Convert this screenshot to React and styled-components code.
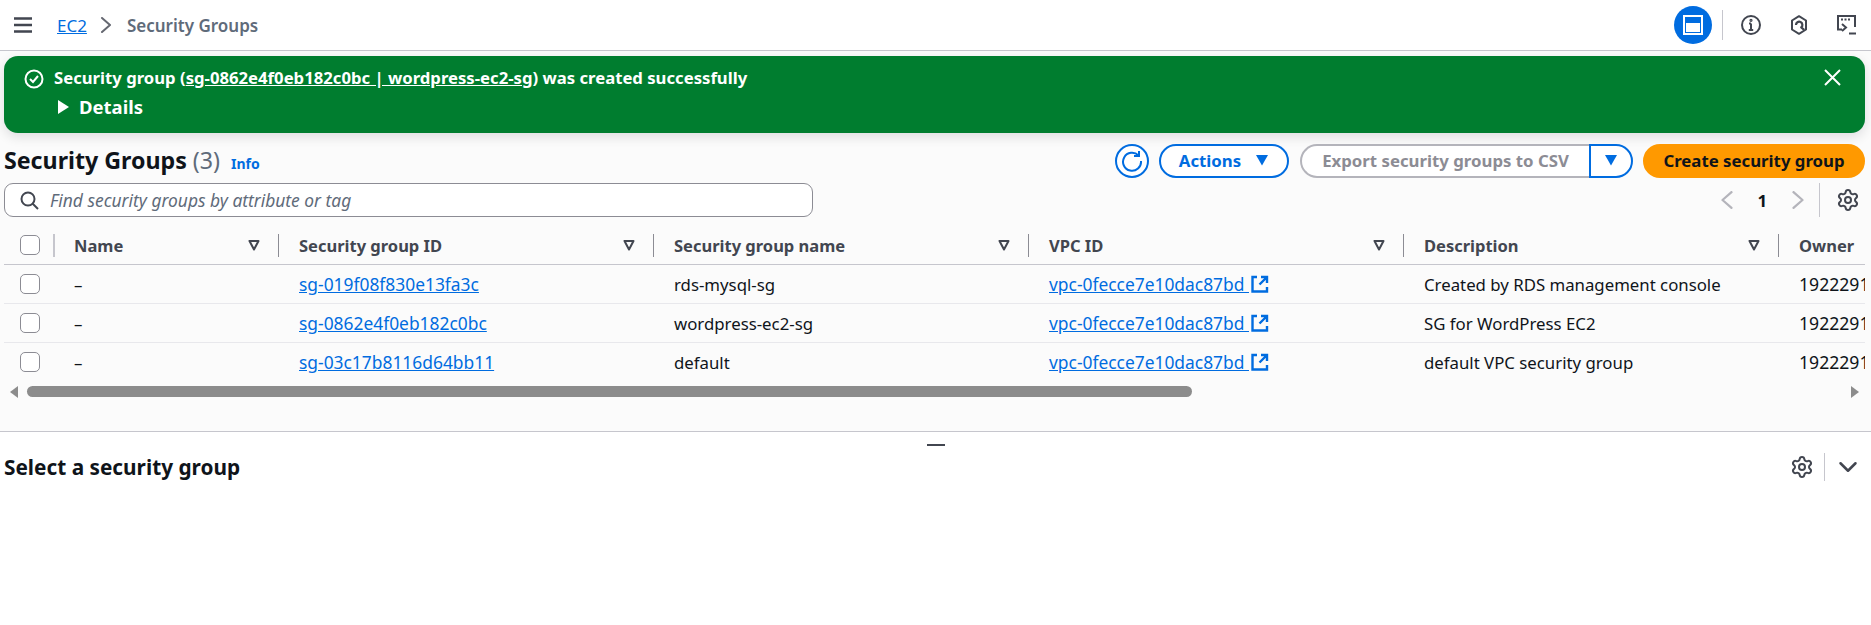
import React from 'react';
import styled, { createGlobalStyle } from 'styled-components';
import { Settings } from 'lucide-react';

const GlobalStyle = createGlobalStyle`
  html, body { margin: 0; padding: 0; background: #fff; }
  body { font-family: 'Noto Sans', sans-serif; color: #0f141a; font-size: 16.8px; overflow: hidden; }
`;

const rows = [
  { id: 'sg-019f08f830e13fa3c', name: 'rds-mysql-sg', desc: 'Created by RDS management console' },
  { id: 'sg-0862e4f0eb182c0bc', name: 'wordpress-ec2-sg', desc: 'SG for WordPress EC2' },
  { id: 'sg-03c17b8116d64bb11', name: 'default', desc: 'default VPC security group' },
];

const Page = styled.div`
  width: 1871px;
  height: 625px;
  background: #fff;
  overflow: hidden;
`;

const TopBar = styled.header`
  height: 50px;
  border-bottom: 1px solid #c6c6cd;
  display: flex;
  align-items: center;
  padding: 0 15px 0 14px;
`;

const Crumbs = styled.nav`
  display: flex;
  align-items: center;
  margin-left: 25px;
  font-size: 17px;
  flex: 1;
`;

const CrumbLink = styled.a`
  color: #006ce0;
  text-decoration: underline;
`;

const CrumbSep = styled.span`
  display: flex;
  margin-left: 11px;
`;

const CrumbCurrent = styled.span`
  color: #5f6b7a;
  font-weight: 600;
  margin-left: 13px;
`;

const IconRow = styled.div`
  display: flex;
  align-items: center;
`;

const RoundBlue = styled.div`
  width: 38px;
  height: 38px;
  border-radius: 50%;
  background: #006ce0;
  display: flex;
  align-items: center;
  justify-content: center;
`;

const VLine = styled.span`
  width: 1px;
  height: ${p => p.$h || 30}px;
  background: ${p => p.$c || '#c6c6cd'};
  margin: ${p => p.$m || '0'};
  flex: none;
`;

const TopIcon = styled.span`
  display: flex;
  margin-left: ${p => p.$ml}px;
`;

const Content = styled.main`
  box-sizing: border-box;
  background: #fbfbfb;
  height: 381px;
  padding: 5px 6px 0 4px;
  border-bottom: 1px solid #c6c6cd;
`;

const Banner = styled.div`
  box-sizing: border-box;
  height: 77px;
  background: #007d2f;
  border-radius: 14px;
  color: #fff;
  box-shadow: 0 4px 12px rgba(0, 7, 22, 0.12);
  display: flex;
  align-items: flex-start;
  padding: 11px 24px 0 20px;
  font-size: 16.7px;
  font-weight: 700;
`;

const BannerIcon = styled.svg`
  margin-top: 2px;
  flex: none;
`;

const BannerBody = styled.div`
  flex: 1;
  margin-left: 10px;
  line-height: 22px;
`;

const BannerLink = styled.a`
  color: #fff;
  text-decoration: underline;
`;

const Details = styled.div`
  display: flex;
  align-items: center;
  gap: 10px;
  margin-top: 6px;
  padding-left: 4px;
  font-size: 18.5px;
  line-height: 24px;
  font-weight: 700;
`;

const HeaderRow = styled.div`
  display: flex;
  align-items: center;
  height: 34px;
  margin-top: 11px;
`;

const Title = styled.h1`
  margin: 0;
  padding-bottom: 2px;
  font-size: 23.2px;
  font-weight: 700;
  color: #0f141a;
`;

const Count = styled.span`
  font-weight: 400;
  color: #5f6b7a;
  margin-left: 6px;
`;

const InfoLink = styled.a`
  color: #006ce0;
  font-size: 14px;
  font-weight: 700;
  margin-left: 11px;
  margin-top: 4px;
`;

const Spacer = styled.div`
  flex: 1;
`;

const RefreshBtn = styled.button`
  width: 34px;
  height: 34px;
  padding: 0;
  border: 2px solid #006ce0;
  border-radius: 50%;
  background: #fff;
  display: flex;
  align-items: center;
  justify-content: center;
`;

const Pill = styled.button`
  height: 34px;
  box-sizing: border-box;
  background: ${p => p.$bg || '#fff'};
  border: 2px solid ${p => p.$bd || '#006ce0'};
  border-radius: 17px;
  color: ${p => p.$fg || '#006ce0'};
  font: 700 16.8px 'Noto Sans', sans-serif;
  display: flex;
  align-items: center;
  justify-content: center;
  gap: 14px;
  padding: 0 0 2px;
  width: ${p => p.$w}px;
  margin-left: ${p => p.$ml}px;
`;

const SplitLeft = styled(Pill)`
  border-right: none;
  border-radius: 17px 0 0 17px;
`;

const SplitRight = styled(Pill)`
  border-radius: 0 17px 17px 0;
`;

const SearchRow = styled.div`
  display: flex;
  align-items: center;
  height: 34px;
  margin-top: 5px;
  padding-right: 5px;
`;

const SearchBox = styled.div`
  width: 809px;
  height: 34px;
  box-sizing: border-box;
  background: #fff;
  border: 1px solid #8c8c94;
  border-radius: 9px;
  display: flex;
  align-items: center;
  gap: 11px;
  padding: 0 15px;
  color: #5f6b7a;
  font-size: 17.4px;
  font-style: italic;
`;

const Pager = styled.div`
  display: flex;
  align-items: center;
  color: #0f141a;
  font-weight: 700;
`;

const PageNum = styled.span`
  margin: 0 22px 0 21px;
`;

const Table = styled.div`
  overflow: hidden;
  margin-top: 9px;
`;

const Grid = styled.div`
  width: 2100px;
`;

const Row = styled.div`
  box-sizing: border-box;
  display: grid;
  grid-template-columns: 49px 225px 375px 375px 375px 375px 326px;
  height: 39px;
  align-items: center;
  border-bottom: 1px solid ${p => p.$line};
`;

const CheckCell = styled.div`
  padding-left: 16px;
  display: flex;
  align-items: center;
`;

const Check = styled.span`
  width: 20px;
  height: 20px;
  box-sizing: border-box;
  border: 1px solid #8c8c94;
  border-radius: 5px;
  background: #fff;
`;

const HeadCell = styled.div`
  display: flex;
  align-items: center;
  height: 23px;
  padding-left: ${p => p.$first ? 19 : 20}px;
  padding-right: 18px;
  border-left: ${p => p.$first ? '2px solid #c6c6cd' : '1px solid #8c8c94'};
  color: #424650;
  font-size: 16.5px;
  font-weight: 700;
  justify-content: space-between;
`;

const Cell = styled.div`
  padding-left: 21px;
  color: #0f141a;
  white-space: pre;
  display: flex;
  align-items: center;
  gap: 2px;
`;

const OwnerCell = styled(Cell)`
  font-size: 17.6px;
`;

const RowLink = styled.a`
  color: #006ce0;
  text-decoration: underline;
  font-size: 17.4px;
`;

const ScrollRow = styled.div`
  display: flex;
  align-items: center;
  height: 11px;
  margin-top: 4px;
  padding: 0 6px;
`;

const Thumb = styled.div`
  width: 1165px;
  height: 11px;
  border-radius: 6px;
  background: #8c8c8c;
  margin-left: 9px;
`;

const Handle = styled.div`
  display: flex;
  justify-content: center;
  height: 14px;
  align-items: flex-end;
`;

const HandleBar = styled.span`
  width: 18px;
  height: 2px;
  background: #424650;
`;

const SplitPanel = styled.section`
  display: flex;
  align-items: center;
  padding: 0 13px 0 4px;
  height: 34px;
  margin-top: 4px;
`;

const PanelTitle = styled.h2`
  margin: 0;
  font-size: 20.8px;
  font-weight: 700;
  flex: 1;
`;

const Hamburger = () => (
  <svg width="18" height="16" viewBox="0 0 18 16" fill="none" stroke="#424650" strokeWidth="2.4">
    <path d="M0 1.5h18M0 8h18M0 14.5h18" />
  </svg>
);

const Chevron = ({ dir = 'right', color = '#656871', size = 16 }) => (
  <svg width={size} height={size} viewBox="0 0 16 16" fill="none" stroke={color} strokeWidth="2" strokeLinejoin="round" strokeLinecap="round">
    {dir === 'right' && <path d="M4 1l8 7-8 7" />}
    {dir === 'left' && <path d="M12 1L4 8l8 7" />}
    {dir === 'down' && <path d="M2 5l6 6 6-6" />}
  </svg>
);

const Gear = () => <Settings size={24} color="#424650" strokeWidth={2} />;

const SortIcon = () => (
  <svg width="12" height="12" viewBox="0 0 12 12" fill="none" stroke="#424650" strokeWidth="2" strokeLinejoin="round">
    <path d="M1.5 2h9L6 10.5z" />
  </svg>
);

const Caret = ({ color = '#006ce0' }) => (
  <svg width="14" height="12" viewBox="0 0 14 12" fill={color}>
    <path d="M1 1h12L7 11.5z" />
  </svg>
);

const External = () => (
  <svg width="18" height="18" viewBox="0 0 18 18" fill="none" stroke="#006ce0" strokeWidth="2.4">
    <path d="M6 2H1.5v14.5H16V12" />
    <path d="M10 2h6v6M16 2L8.5 9.5" />
  </svg>
);

const Refresh = () => (
  <svg width="22" height="22" viewBox="0 0 22 22" fill="none" stroke="#006ce0" strokeWidth="2">
    <path d="M17.5 5.5A9 9 0 1 0 20 11" />
    <path d="M18 1v5h-5" />
  </svg>
);

const App = () => (
  <Page>
    <GlobalStyle />
    <TopBar>
      <Hamburger />
      <Crumbs>
        <CrumbLink>EC2</CrumbLink>
        <CrumbSep><Chevron size={16} /></CrumbSep>
        <CrumbCurrent>Security Groups</CrumbCurrent>
      </Crumbs>
      <IconRow>
        <RoundBlue>
          <svg width="22" height="22" viewBox="0 0 22 22" fill="none">
            <rect x="2" y="2" width="18" height="18" stroke="#fff" strokeWidth="2" />
            <rect x="4" y="9" width="14" height="9" fill="#fff" />
          </svg>
        </RoundBlue>
        <VLine $m="0 0 0 10px" />
        <TopIcon $ml={18}>
          <svg width="20" height="20" viewBox="0 0 20 20" fill="none" stroke="#424650" strokeWidth="2">
            <circle cx="10" cy="10" r="9" />
            <path d="M10 8.5V15M7.8 15h4.4M8 8.5h2" />
            <circle cx="10" cy="5.3" r="0.6" />
          </svg>
        </TopIcon>
        <TopIcon $ml={29}>
          <svg width="18" height="20" viewBox="0 0 18 20" fill="none" stroke="#424650" strokeWidth="2" strokeLinejoin="round">
            <path d="M9 1.2l7 4.3v9L9 18.8l-7-4.3v-9z" />
            <path d="M6 10a3.2 3.2 0 1 1 5.2 2.4l3 2.4" strokeWidth="2.2" />
          </svg>
        </TopIcon>
        <TopIcon $ml={29}>
          <svg width="19" height="20" viewBox="0 0 19 20" fill="none" stroke="#424650" strokeWidth="2">
            <path d="M5 14.5H1V1h17v11" />
            <path d="M4 4.5h2M7.5 4.5h2M11 4.5h2" />
            <path d="M5 9l4 3.5L5 16M12 18.5h7" />
          </svg>
        </TopIcon>
      </IconRow>
    </TopBar>

    <Content>
      <Banner>
        <BannerIcon width="20" height="20" viewBox="0 0 20 20" fill="none" stroke="#fff" strokeWidth="2">
          <circle cx="10" cy="10" r="8.5" />
          <path d="M6 10l3 3 5-6" />
        </BannerIcon>
        <BannerBody>
          Security group (<BannerLink>sg-0862e4f0eb182c0bc | wordpress-ec2-sg</BannerLink>) was created successfully
          <Details>
            <svg width="11" height="14" viewBox="0 0 11 14" fill="#fff"><path d="M0 0l11 7-11 7z" /></svg>
            Details
          </Details>
        </BannerBody>
        <BannerIcon width="17" height="17" viewBox="0 0 17 17" fill="none" stroke="#fff" strokeWidth="2">
          <path d="M1 1l15 15M16 1L1 16" />
        </BannerIcon>
      </Banner>

      <HeaderRow>
        <Title>Security Groups<Count>(3)</Count></Title>
        <InfoLink>Info</InfoLink>
        <Spacer />
        <RefreshBtn><Refresh /></RefreshBtn>
        <Pill $w={130} $ml={10}>Actions <Caret /></Pill>
        <SplitLeft $w={289} $ml={11} $bd="#b4b4bb" $fg="#8c8c94">Export security groups to CSV</SplitLeft>
        <SplitRight $w={44} $ml={0}><Caret /></SplitRight>
        <Pill $w={222} $ml={10} $bg="#ff9900" $bd="#ff9900" $fg="#0f141a">Create security group</Pill>
      </HeaderRow>

      <SearchRow>
        <SearchBox>
          <svg width="19" height="19" viewBox="0 0 19 19" fill="none" stroke="#424650" strokeWidth="2">
            <circle cx="8" cy="8" r="6.5" />
            <path d="M12.5 12.5l5.5 5.5" />
          </svg>
          Find security groups by attribute or tag
        </SearchBox>
        <Spacer />
        <Pager>
          <Chevron dir="left" color="#b4b4bb" size={18} />
          <PageNum>1</PageNum>
          <Chevron dir="right" color="#b4b4bb" size={18} />
        </Pager>
        <VLine $h={34} $m="0 16px 0 12px" />
        <Gear />
      </SearchRow>

      <Table>
        <Grid>
          <Row $line="#c6c6cd">
            <CheckCell><Check /></CheckCell>
            <HeadCell $first>Name <SortIcon /></HeadCell>
            <HeadCell>Security group ID <SortIcon /></HeadCell>
            <HeadCell>Security group name <SortIcon /></HeadCell>
            <HeadCell>VPC ID <SortIcon /></HeadCell>
            <HeadCell>Description <SortIcon /></HeadCell>
            <HeadCell>Owner <SortIcon /></HeadCell>
          </Row>
          {rows.map((r, i) => (
            <Row key={r.id} $line={i === 2 ? 'transparent' : '#e8e8ec'}>
              <CheckCell><Check /></CheckCell>
              <Cell>–</Cell>
              <Cell><RowLink>{r.id}</RowLink></Cell>
              <Cell>{r.name}</Cell>
              <Cell><RowLink>{'vpc-0fecce7e10dac87bd '}</RowLink><External /></Cell>
              <Cell>{r.desc}</Cell>
              <OwnerCell>1922291</OwnerCell>
            </Row>
          ))}
        </Grid>
      </Table>

      <ScrollRow>
        <svg width="8" height="12" viewBox="0 0 8 12" fill="#8c8c8c"><path d="M8 0v12L0 6z" /></svg>
        <Thumb />
        <Spacer />
        <svg width="8" height="12" viewBox="0 0 8 12" fill="#8c8c8c"><path d="M0 0v12l8-6z" /></svg>
      </ScrollRow>
    </Content>

    <Handle><HandleBar /></Handle>
    <SplitPanel>
      <PanelTitle>Select a security group</PanelTitle>
      <Gear />
      <VLine $h={28} $m="0 13px 0 10px" />
      <Chevron dir="down" color="#424650" size={20} />
    </SplitPanel>
  </Page>
);

export default App;
